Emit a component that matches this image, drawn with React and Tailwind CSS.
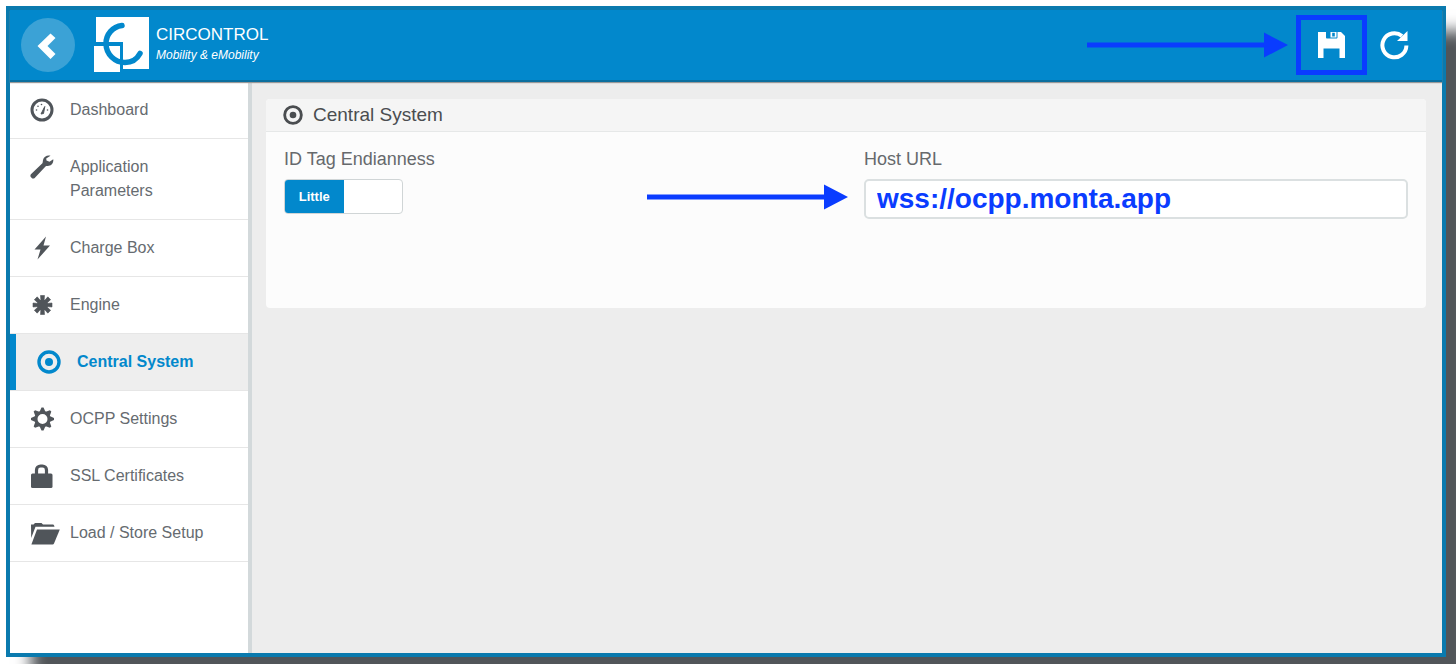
import React, { useState } from "react";

const DashboardIcon = () => (
  <svg className="w-[30px] h-6 shrink-0" viewBox="0 0 30 24">
    <circle cx="12" cy="12" r="10" fill="none" stroke="currentColor" strokeWidth="3" />
    <path d="M11 16 14.8 8.5 13.500 15.500z" fill="currentColor" stroke="currentColor" strokeWidth="1" />
    <g fill="currentColor">
      <circle cx="6.5" cy="12" r="0.8" />
      <circle cx="8" cy="8.2" r="0.8" />
      <circle cx="11.5" cy="6.5" r="0.8" />
      <circle cx="17.5" cy="12" r="0.8" />
    </g>
  </svg>
);

const WrenchIcon = () => (
  <svg className="w-[30px] h-6 shrink-0" viewBox="0 0 30 24" fill="currentColor">
    <path d="M20.5.8C17.5-.2 13.8 1.5 13 5c-.3 1.4-.1 2.4-.6 3.200L.9 19.300c-.8.9-.6 2.200.2 3l.6.7c.8.8 2.200.8 3-.1L15.500 11.500c.8-.7 2-.4 3.400-.7 3.100-.7 5-3.700 4.300-6.600l-3.700 2.600-3-1.200-.3-2.200z" />
  </svg>
);

const FlashIcon = () => (
  <svg className="w-[30px] h-6 shrink-0" viewBox="0 0 30 24" fill="currentColor">
    <path d="M16 .5 4.500 13.500h6L7.500 23.500 20 9.500h-6.500z" />
  </svg>
);

const EngineIcon = () => (
  <svg className="w-[30px] h-6 shrink-0" viewBox="0 0 30 24" fill="currentColor">
    {[0, 45, 90, 135].map((angle) => (
      <path
        key={angle}
        d="M10.500 2.500h4L13.800 12l.7 9.500h-4l.7-9.500z"
        transform={`rotate(${angle} 12.500 12)`}
        stroke="currentColor"
        strokeWidth="0.6"
      />
    ))}
    <circle cx="12.500" cy="12" r="5.500" />
  </svg>
);

const TargetIcon = ({ className }) => (
  <svg className={className} viewBox="0 0 24 24">
    <circle cx="12" cy="12" r="10" fill="none" stroke="currentColor" strokeWidth="3.400" />
    <circle cx="12" cy="12" r="4" fill="currentColor" />
  </svg>
);

const GearIcon = () => (
  <svg className="w-[30px] h-6 shrink-0" viewBox="0 0 30 24" fill="currentColor">
    {[0, 45, 90, 135, 180, 225, 270, 315].map((angle) => (
      <path
        key={angle}
        d="M9 6 11.500.5h2L16 6z"
        transform={`rotate(${angle} 12.500 12)`}
      />
    ))}
    <circle cx="12.500" cy="12" r="6.500" fill="none" stroke="currentColor" strokeWidth="3" />
  </svg>
);

const LockIcon = () => (
  <svg className="w-[30px] h-6 shrink-0" viewBox="0 0 30 24">
    <path d="M6.500 11V6a4 4 0 0 1 4-4h2a4 4 0 0 1 4 4v5" fill="none" stroke="currentColor" strokeWidth="3.200" />
    <rect x="1" y="9.500" width="21.500" height="14.500" rx="1.500" fill="currentColor" />
  </svg>
);

const FolderIcon = () => (
  <svg className="w-[30px] h-6 shrink-0" viewBox="0 0 30 24" fill="currentColor">
    <path d="M1 3.500h2.500L5 2h6.500L13 3.500h9.500c1 0 1.800.6 2 2.200H5.500L1.200 17z" />
    <path d="M7 8.500h22.800L24 22.500c-.3.600-.7.900-1.400.9H1.400z" />
  </svg>
);

const SaveIcon = () => (
  <svg className="w-[27px] h-[26px]" viewBox="0 0 27 26" fill="currentColor">
    <path d="M0 0h8v5.500c0 .5.500 1 1 1h9.500c.5 0 1-.5 1-1V0H23l4 4v22h-5.500v-9.500h-16V26H0z" />
    <path fillRule="evenodd" d="M12.500 0h6v5.500h-6zM14.200.8v3.700h2.600V.8z" />
  </svg>
);

const ReloadIcon = () => (
  <svg className="w-[29px] h-[30px]" viewBox="0 0 29 30">
    <path d="M26.400 15.500A12 12 0 1 1 22 6" fill="none" stroke="currentColor" strokeWidth="4" />
    <path d="M27.500 1v10H17z" fill="currentColor" />
  </svg>
);

const Logo = () => (
  <svg className="w-14 h-[56px]" viewBox="0 0 56 56">
    <path d="M3 0h53v52H30V25H3z" fill="#fff" />
    <path d="M1 29h26v26H1z" fill="#fff" />
    <path
      d="M29 8.500A18 18 0 0 0 13 27 19 19 0 0 0 32 45.500 17 17 0 0 0 47 36.500"
      fill="none"
      stroke="#0288cc"
      strokeWidth="5.500"
      strokeLinecap="round"
    />
  </svg>
);

const Arrow = ({ className }) => (
  <svg className={className} viewBox="0 0 201 26" fill="#0a3cff">
    <path d="M0 10.500h177V.500l24 12.500-24 12.500v-10H0z" />
  </svg>
);

const MENU = [
  { label: "Dashboard", icon: <DashboardIcon /> },
  { label: "Application Parameters", icon: <WrenchIcon /> },
  { label: "Charge Box", icon: <FlashIcon /> },
  { label: "Engine", icon: <EngineIcon /> },
  {
    label: "Central System",
    icon: (
      <span className="w-[30px] shrink-0">
        <TargetIcon className="w-6 h-6" />
      </span>
    ),
    active: true,
  },
  { label: "OCPP Settings", icon: <GearIcon /> },
  { label: "SSL Certificates", icon: <LockIcon /> },
  { label: "Load / Store Setup", icon: <FolderIcon /> },
];

const Header = () => (
  <header className="relative z-10 h-[72px] bg-[#0288cc] border-b-2 border-[#0b6f9f] shadow-[0_1px_1px_#999] flex items-center pl-[11px] pr-[33px] text-white">
    <button
      aria-label="Back"
      className="w-[54px] h-[54px] rounded-full bg-[#3ba2d6] flex items-center justify-center"
    >
      <svg className="w-[54px] h-[54px]" viewBox="0 0 54 54" fill="currentColor">
        <path d="M29.500 15.500 34.500 20 26.500 28 34.500 36 29.500 41 16.500 28z" />
      </svg>
    </button>
    <a href="#home" className="ml-[18px] flex items-center gap-[7px]">
      <Logo />
      <span className="flex flex-col">
        <span className="text-[17px] leading-5">CIRCONTROL</span>
        <span className="text-[12px] leading-5 italic">
          Mobility &amp; eMobility
        </span>
      </span>
    </a>
    <div className="ml-auto flex items-center">
      <Arrow className="w-[201px] h-[26px] mr-2" />
      <button
        aria-label="Save"
        className="w-[71px] h-[60px] border-[5px] border-[#0a3cff] flex items-center justify-center"
      >
        <SaveIcon />
      </button>
      <button aria-label="Reload" className="ml-[13px]">
        <ReloadIcon />
      </button>
    </div>
  </header>
);

const Sidebar = () => (
  <nav className="w-[242px] shrink-0 bg-white border-r-4 border-[#d3d9db]">
    <ul>
      {MENU.map(({ label, icon, active }) => (
        <li key={label} className="border-b border-[#e6e6e6]">
          <a
            href="#menu"
            className={`flex gap-[10px] py-4 pr-10 text-[16px] leading-6 ${
              active
                ? "pl-[21px] border-l-[6px] border-[#0288cc] bg-[#eeeeee] text-[#0288cc] font-bold"
                : "pl-5 text-[#50555a]"
            }`}
          >
            {icon}
            <span className={active ? "" : "text-[#666b70]"}>{label}</span>
          </a>
        </li>
      ))}
    </ul>
  </nav>
);

const CentralSystem = () => {
  const [little, setLittle] = useState(true);
  const [hostUrl, setHostUrl] = useState("wss://ocpp.monta.app");

  return (
    <section className="bg-[#fcfcfc] rounded-[4px] min-h-[209px]">
      <h1 className="h-[33px] px-[17px] flex items-center gap-[10px] bg-[#f5f5f5] border-b border-[#e6e8e8] rounded-t-[4px] text-[19px] leading-6 text-[#4a4d50]">
        <TargetIcon className="w-5 h-5" />
        Central System
      </h1>
      <div className="grid grid-cols-2 pt-[15px] text-[#66696c]">
        <div className="px-[18px]">
          <span id="endianness" className="block text-[18px] leading-6 mb-2">
            ID Tag Endianness
          </span>
          <button
            role="switch"
            aria-checked={little}
            aria-labelledby="endianness"
            onClick={() => setLittle(!little)}
            className="w-[119px] h-[35px] flex bg-white border border-[#d0d5d6] rounded-[4px] overflow-hidden"
          >
            <span className="w-1/2 h-full flex items-center justify-center bg-[#0288cc] text-white text-[13px] font-bold">
              {little ? "Little" : "Big"}
            </span>
          </button>
        </div>
        <div className="px-[18px]">
          <label htmlFor="host" className="block text-[18px] leading-6 mb-2">
            Host URL
          </label>
          <div className="relative">
            <Arrow className="absolute right-full top-[5px] mr-4 w-[201px] h-[26px]" />
            <input
              id="host"
              type="text"
              value={hostUrl}
              onChange={(e) => setHostUrl(e.target.value)}
              className="block w-full h-10 px-[11px] bg-white border-2 border-[#dbe0e1] rounded-[5px] font-bold text-[28px] text-[#0a3cff]"
            />
          </div>
        </div>
      </div>
    </section>
  );
};

const App = () => (
  <div className="min-h-screen flex bg-white pt-[6px] pl-[6px] pr-[10px] pb-[7px] overflow-hidden font-['Liberation_Sans',Arial,sans-serif]">
    <div className="flex-1 flex flex-col border-4 border-[#0a7aae] shadow-[25px_25px_15px_#515559]">
      <Header />
      <div className="flex-1 flex">
        <Sidebar />
        <main className="flex-1 bg-[#ededed] pt-[17px] pl-[14px] pr-4">
          <CentralSystem />
        </main>
      </div>
    </div>
  </div>
);

export default App;
